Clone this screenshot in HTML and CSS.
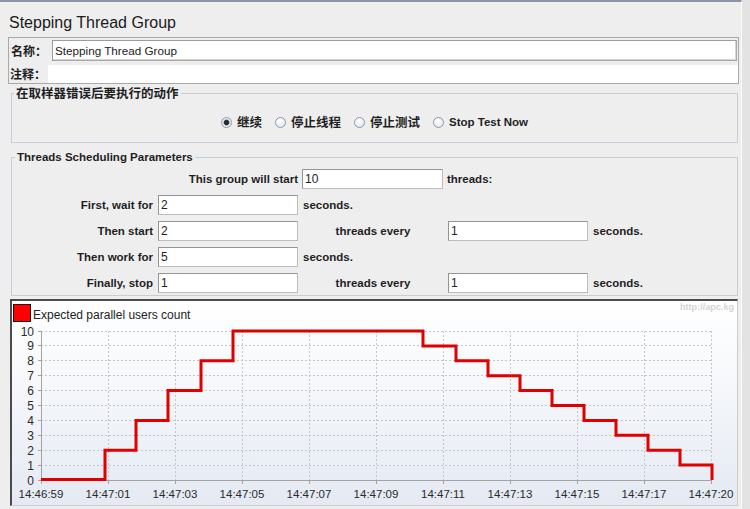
FILE: index.html
```html
<!DOCTYPE html>
<html lang="zh-CN">
<head>
<meta charset="utf-8">
<title>Stepping Thread Group</title>
<link rel="stylesheet" href="styles.css">
</head>
<body>
<div class="app">
  <h1 class="title">Stepping Thread Group</h1>

  <div class="namebox">
    <div class="namerow">
      <span class="cjk-lbl name-lbl">名称：</span>
      <div class="field name-field">Stepping Thread Group</div>
    </div>
    <div class="namerow comment">
      <span class="cjk-lbl comment-lbl">注释：</span>
      <div class="comment-field"></div>
    </div>
  </div>

  <fieldset class="group group-action">
    <legend class="legend-cjk">在取样器错误后要执行的动作</legend>
    <div class="radios">
      <div class="radio"><span class="dot checked"></span><span class="radio-cjk">继续</span></div>
      <div class="radio"><span class="dot"></span><span class="radio-cjk">停止线程</span></div>
      <div class="radio"><span class="dot"></span><span class="radio-cjk">停止测试</span></div>
      <div class="radio"><span class="dot"></span><span class="radio-lat">Stop Test Now</span></div>
    </div>
  </fieldset>

  <fieldset class="group group-sched">
    <legend class="legend-lat">Threads Scheduling Parameters</legend>
    <div class="sched">
      <span class="lbl r1-lbl">This group will start</span>
      <div class="field r1-field">10</div>
      <span class="txt r1-txt">threads:</span>

      <span class="lbl c1">First, wait for</span>
      <div class="field c2">2</div>
      <span class="txt c3">seconds.</span>

      <span class="lbl c1">Then start</span>
      <div class="field c2">2</div>
      <span class="txt c3 mid">threads every</span>
      <div class="field c4">1</div>
      <span class="txt c5">seconds.</span>

      <span class="lbl c1">Then work for</span>
      <div class="field c2">5</div>
      <span class="txt c3">seconds.</span>

      <span class="lbl c1">Finally, stop</span>
      <div class="field c2">1</div>
      <span class="txt c3 mid">threads every</span>
      <div class="field c4">1</div>
      <span class="txt c5">seconds.</span>
    </div>
  </fieldset>

  <div class="chart">
    <svg class="plot" width="725" height="204" viewBox="12 301 725 204">
      <rect x="13.5" y="304.5" width="17" height="17" fill="#ff0000" stroke="#2a0000"/>
      <text class="legend-text" x="33" y="319">Expected parallel users count</text>
      <text class="wm" x="680" y="310" textLength="54" lengthAdjust="spacingAndGlyphs">http://apc.kg</text>

      <path class="grid" d="M41 331.5H712 M41 345.5H712 M41 360.5H712 M41 375.5H712 M41 390.5H712 M41 405.5H712 M41 420.5H712 M41 435.5H712 M41 450.5H712 M41 465.5H712
        M108.5 331V480 M175.5 331V480 M242.5 331V480 M309.5 331V480 M376.5 331V480 M443.5 331V480 M510.5 331V480 M577.5 331V480 M644.5 331V480 M711.5 331V480"/>

      <path class="axis" d="M41.5 331V481 M41 480.5H712
        M38 331.5H41 M38 345.5H41 M38 360.5H41 M38 375.5H41 M38 390.5H41 M38 405.5H41 M38 420.5H41 M38 435.5H41 M38 450.5H41 M38 465.5H41 M38 480.5H41
        M41.5 481V484 M108.5 481V484 M175.5 481V484 M242.5 481V484 M309.5 481V484 M376.5 481V484 M443.5 481V484 M510.5 481V484 M577.5 481V484 M644.5 481V484 M711.5 481V484"/>

      <g class="ylab">
        <text x="34" y="335.5">10</text>
        <text x="34" y="350">9</text>
        <text x="34" y="365">8</text>
        <text x="34" y="380">7</text>
        <text x="34" y="395">6</text>
        <text x="34" y="410">5</text>
        <text x="34" y="425">4</text>
        <text x="34" y="440">3</text>
        <text x="34" y="455">2</text>
        <text x="34" y="470">1</text>
        <text x="34" y="485">0</text>
      </g>
      <g class="xlab">
        <text x="41" y="498">14:46:59</text>
        <text x="108" y="498">14:47:01</text>
        <text x="175" y="498">14:47:03</text>
        <text x="242" y="498">14:47:05</text>
        <text x="309" y="498">14:47:07</text>
        <text x="376" y="498">14:47:09</text>
        <text x="443" y="498">14:47:11</text>
        <text x="510" y="498">14:47:13</text>
        <text x="577" y="498">14:47:15</text>
        <text x="644" y="498">14:47:17</text>
        <text x="711" y="498">14:47:20</text>
      </g>

      <polyline class="series" points="41,479.5 105,479.5 105,450.2 136,450.2 136,420.4 168,420.4 168,390.6 201,390.6 201,360.8 233,360.8 233,331 423,331 423,345.9 456,345.9 456,360.8 488,360.8 488,375.7 520,375.7 520,390.6 552,390.6 552,405.5 584,405.5 584,420.4 616,420.4 616,435.3 648,435.3 648,450.2 680,450.2 680,465.1 712,465.1 712,480"/>
    </svg>
  </div>
</div>
</body>
</html>
```

FILE: styles.css
```css
html, body {
  margin: 0;
  padding: 0;
}

body {
  background: #e3e3e3;
  font-family: "Liberation Sans", Arial, "Noto Sans CJK SC", sans-serif;
  color: #1f1f1f;
}

.app {
  width: 742px;
  height: 509px;
  box-sizing: border-box;
  background: #eeeeee;
  border-top: 2px solid #8a96a5;
  border-right: 1px solid #fbfbfb;
  overflow: hidden;
}

.title {
  margin: 0;
  height: 35px;
  box-sizing: border-box;
  padding: 11px 0 0 9px;
  font-size: 16px;
  font-weight: normal;
  line-height: 19px;
  color: #1a1a1a;
}

/* name / comment box */
.namebox {
  margin-left: 8px;
  width: 731px;
  height: 47px;
  box-sizing: border-box;
  border: 1px solid #a9a9a9;
  padding: 2px 1px 0 0;
  display: flex;
  flex-direction: column;
  gap: 4px;
}

.namerow {
  display: flex;
  align-items: center;
  height: 21px;
}

.namerow.comment {
  height: 18px;
  margin-right: -1px;
}

.cjk-lbl {
  font-family: "Noto Sans CJK SC", sans-serif;
  font-weight: bold;
  font-size: 12px;
  line-height: 16px;
  box-sizing: border-box;
  flex: none;
}

.name-lbl {
  width: 43px;
  padding-left: 2px;
}

.comment-lbl {
  width: 39px;
  padding-left: 1px;
}

.field {
  box-sizing: border-box;
  height: 20px;
  background: #ffffff;
  border: 1px solid;
  border-color: #949494 #bdbdbd #bdbdbd #949494;
  padding-left: 2px;
  font-size: 12px;
  font-weight: normal;
  line-height: 18px;
  color: #222;
  white-space: nowrap;
}

.name-field {
  flex: 1;
  height: 21px;
  line-height: 19px;
  font-size: 11.7px;
  border-color: #9c9c9c #a8a8a8 #a8a8a8 #9c9c9c;
  box-shadow: inset -1px -1px 0 #d4d4d4;
}

.comment-field {
  flex: 1;
  height: 18px;
  background: #ffffff;
}

/* titled groups */
.group {
  margin: 0 0 0 11px;
  width: 727px;
  box-sizing: border-box;
  border: 1px solid #c4cdd8;
  padding: 0;
  min-inline-size: auto;
}

.group legend {
  margin-left: 2px;
  padding: 0 2px;
  line-height: 14px;
  font-weight: bold;
  color: #1f1f1f;
}

.legend-cjk {
  font-family: "Noto Sans CJK SC", sans-serif;
  font-size: 12.5px;
}

.legend-lat {
  font-size: 11.5px;
}

.group-action {
  margin-top: 2px;
  padding: 14px 0 12px;
}

.radios {
  display: flex;
  justify-content: center;
  align-items: center;
  gap: 13px;
  height: 16px;
}

.radio {
  display: flex;
  align-items: center;
  font-weight: bold;
}

.dot {
  width: 11px;
  height: 11px;
  box-sizing: border-box;
  border-radius: 50%;
  border: 1px solid #8d99a8;
  background: radial-gradient(circle at 40% 35%, #ffffff 0, #f3f6f9 35%, #d6dee8 100%);
  margin-right: 5px;
  flex: none;
}

.dot.checked {
  background: radial-gradient(circle, #2b2b2b 0, #2b2b2b 2.2px, #9aa6b4 2.8px, #e4e9ef 3.6px, #ffffff 100%);
}

.radio-cjk {
  font-family: "Noto Sans CJK SC", sans-serif;
  font-size: 12.5px;
  line-height: 16px;
}

.radio-lat {
  font-size: 11.5px;
  line-height: 16px;
}

.group-sched {
  margin-top: 7px;
  padding: 5px 0 2px 1px;
}

.sched {
  display: grid;
  grid-template-columns: 140px 140px 140px 140px auto;
  grid-auto-rows: 20px;
  column-gap: 5px;
  row-gap: 6px;
  align-items: center;
  font-size: 11.5px;
  font-weight: bold;
}

.sched .lbl {
  justify-self: end;
  white-space: nowrap;
}

.sched .txt {
  white-space: nowrap;
}

.r1-lbl { grid-column: 1 / 3; }
.r1-field { grid-column: 3; margin-left: -1px; }
.r1-txt { grid-column: 4 / 6; margin-left: -1px; }

.c1 { grid-column: 1; }
.c2 { grid-column: 2; }
.c3 { grid-column: 3; }
.c4 { grid-column: 4; }
.c5 { grid-column: 5; }

.sched .mid { justify-self: center; }

/* chart */
.chart {
  margin: 3px 0 0 10px;
  width: 728px;
  height: 207px;
  box-sizing: border-box;
  border-style: solid;
  border-width: 2px 1px 1px 2px;
  border-color: #4b4b4b #cdcdcd #cdcdcd #4b4b4b;
  background: linear-gradient(180deg, #ffffff 0%, #f6f8fb 40%, #e4e9f3 100%);
}

.plot {
  display: block;
  font-family: "Liberation Sans", Arial, sans-serif;
}

.legend-text {
  font-size: 12px;
  fill: #222222;
}

.wm {
  font-size: 9px;
  font-weight: bold;
  fill: #d5d5d5;
}

.grid {
  fill: none;
  stroke: #c6c6c6;
  stroke-width: 1;
  stroke-dasharray: 2 2;
  shape-rendering: crispEdges;
}

.axis {
  fill: none;
  stroke: #a3a3a3;
  stroke-width: 1;
  shape-rendering: crispEdges;
}

.ylab text {
  font-size: 12px;
  fill: #2a2a2a;
  text-anchor: end;
}

.xlab text {
  font-size: 11.5px;
  fill: #2a2a2a;
  text-anchor: middle;
}

.series {
  fill: none;
  stroke: #e00000;
  stroke-width: 3;
  stroke-linejoin: miter;
}
```
